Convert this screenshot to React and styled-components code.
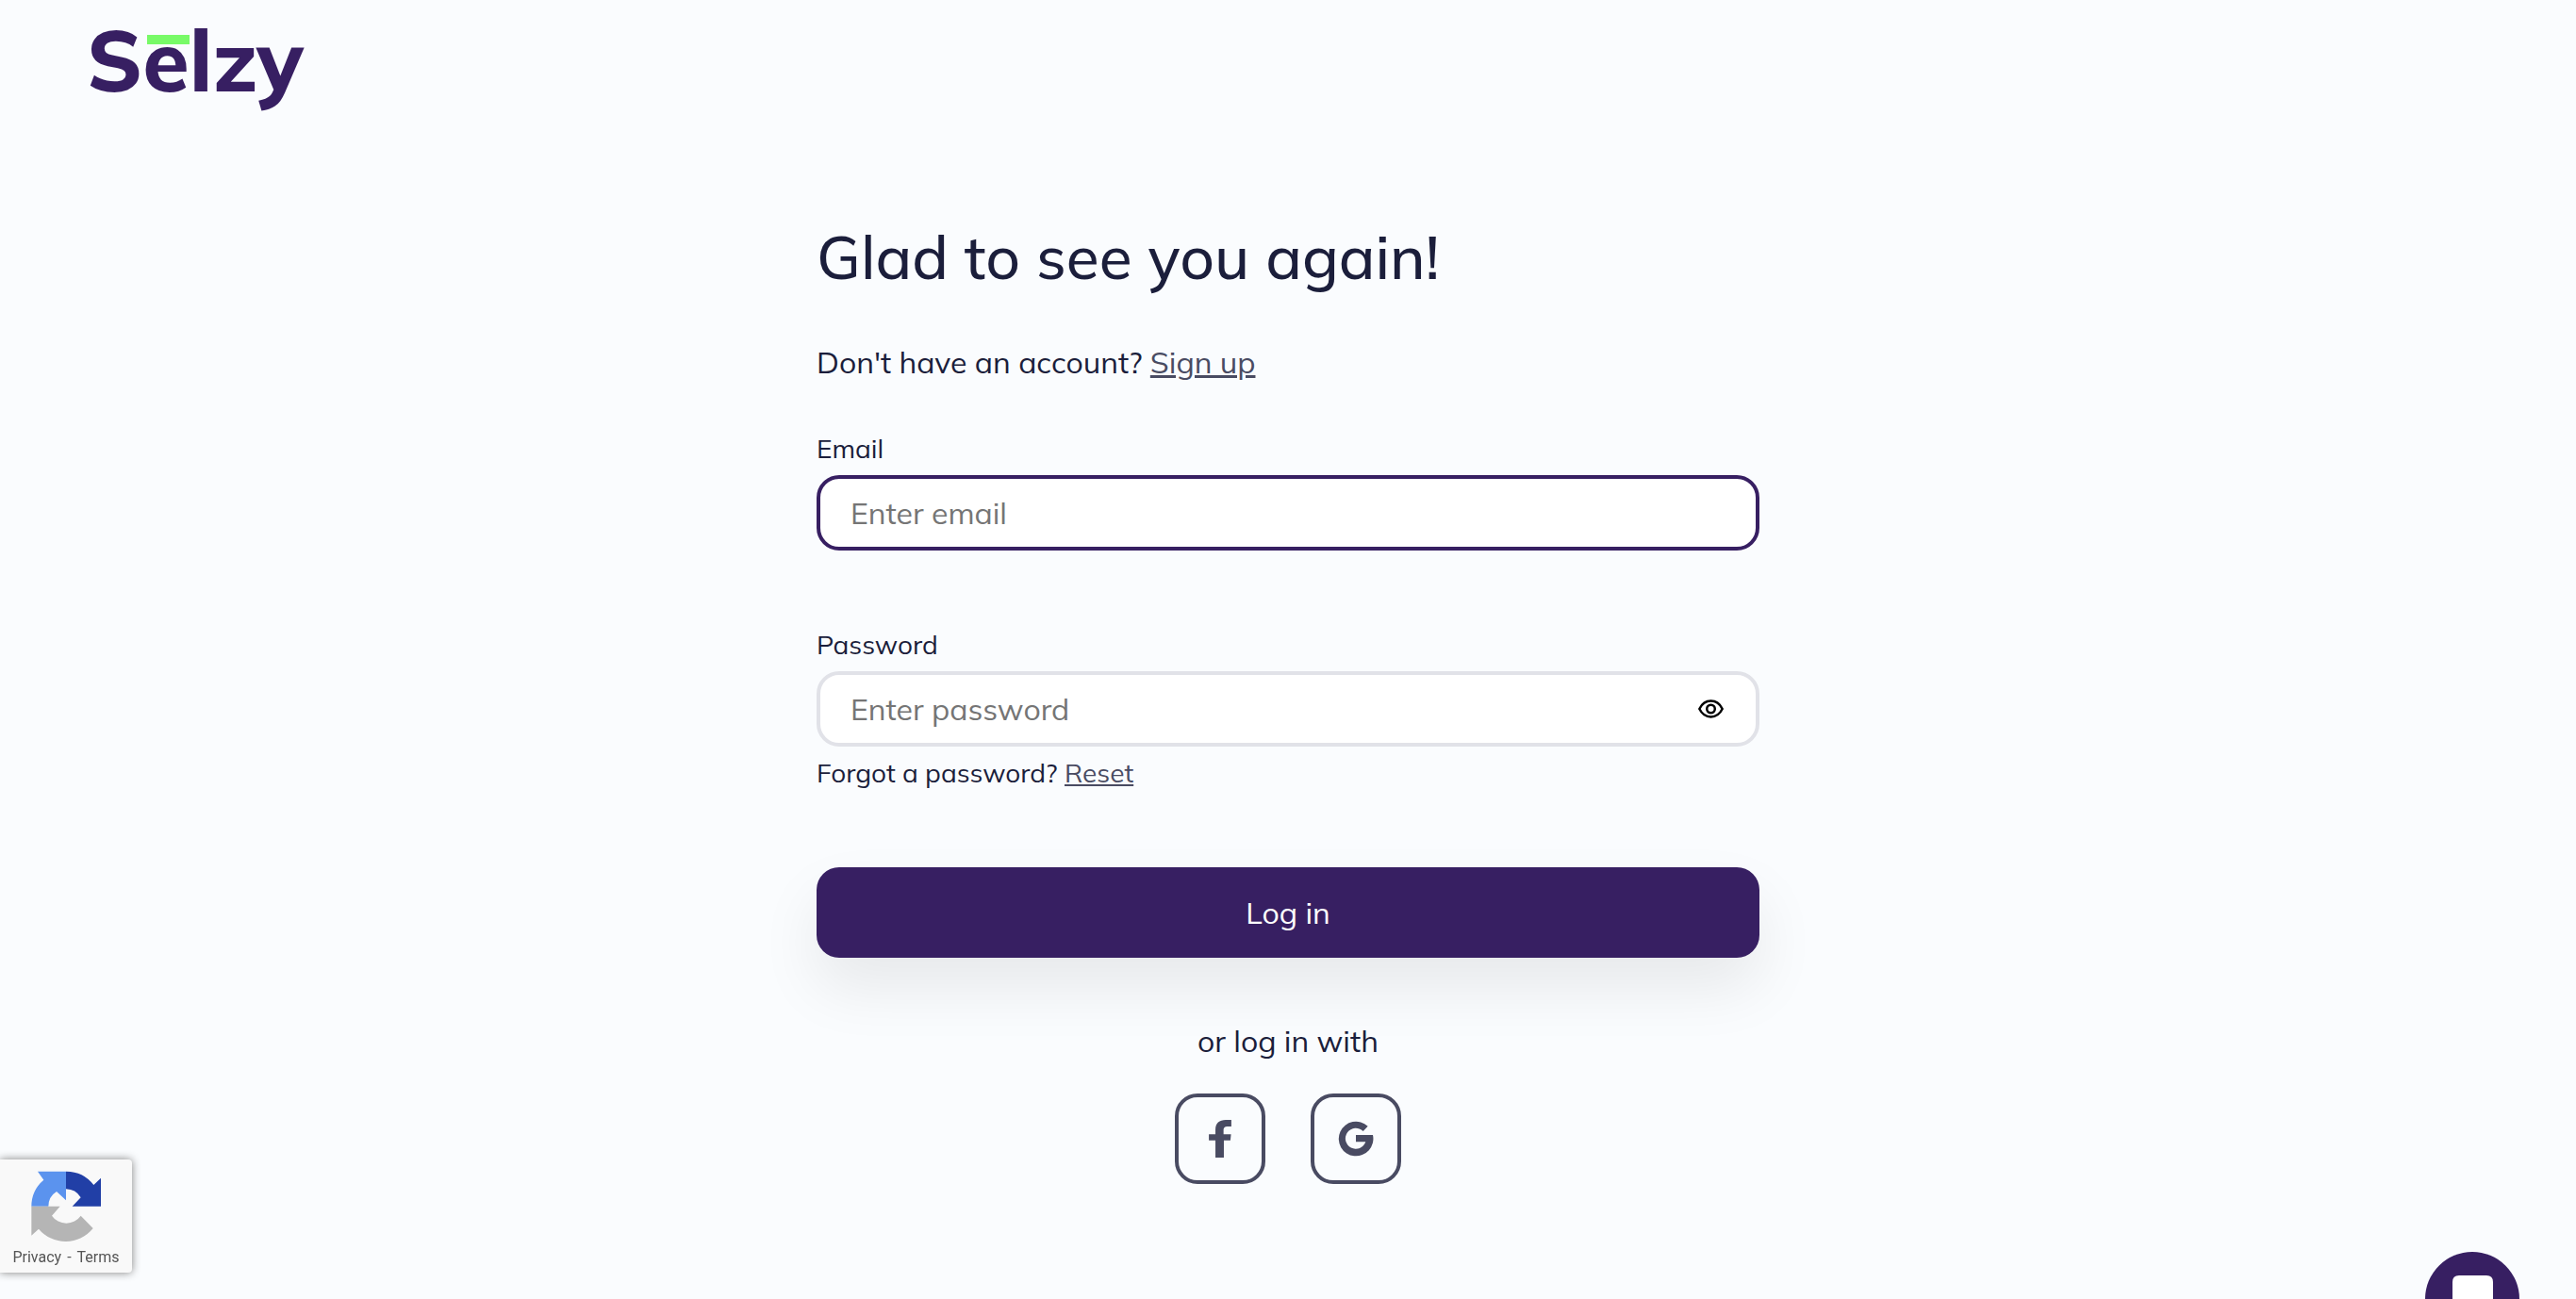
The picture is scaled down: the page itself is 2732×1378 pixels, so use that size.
import React, { useState } from "react";
import styled, { createGlobalStyle } from "styled-components";

const ink = "#1b1e3b";
const brand = "#371f62";
const muted = "#494b62";

const GlobalStyle = createGlobalStyle`
  *, *::before, *::after { box-sizing: border-box; }
  body {
    margin: 0;
    background: #fafcfe;
    color: ${ink};
    font-family: Mulish, "Noto Sans", sans-serif;
    font-size: 32px;
    line-height: 48px;
    overflow: hidden;
  }
  button, input { font: inherit; color: inherit; }
`;

const Page = styled.div`
  min-height: 100vh;
`;

const Header = styled.header`
  display: flex;
  padding: 22px 92px;
`;

const Logo = styled.a`
  position: relative;
  color: ${brand};
  font-family: Mulish, sans-serif;
  font-size: 90px;
  font-weight: 800;
  line-height: 84px;
  text-decoration: none;
`;

const Macron = styled.span`
  position: absolute;
  top: 15px;
  left: 64px;
  width: 45px;
  height: 10px;
  background: #78fa68;
`;

const Main = styled.main`
  width: 100%;
  max-width: 1000px;
  margin: 0 auto;
  padding-top: 104px;
`;

const Title = styled.h1`
  margin: 0 0 48px;
  font-size: 64px;
  font-weight: 500;
  line-height: 80px;
`;

const Text = styled.p`
  margin: 0;
  font-size: ${(p) => (p.$small ? "28px" : "32px")};
  line-height: ${(p) => (p.$small ? "40px" : "48px")};
  text-align: ${(p) => (p.$center ? "center" : "left")};
`;

const TextLink = styled.a`
  color: ${muted};
  text-decoration: underline;
`;

const Form = styled.form`
  display: flex;
  flex-direction: column;
  gap: 80px;
  margin: 48px 0 64px;
`;

const Field = styled.div`
  display: flex;
  flex-direction: column;
  gap: 8px;
`;

const Label = styled.label`
  font-size: 28px;
  line-height: 40px;
`;

const InputBox = styled.div`
  display: flex;
  align-items: center;
  height: 80px;
  padding: 0 32px;
  background: #fff;
  border: 4px solid ${(p) => (p.$active ? brand : "#e1e2e8")};
  border-radius: 24px;
`;

const Input = styled.input`
  flex: 1;
  min-width: 0;
  height: 100%;
  padding: 0;
  border: 0;
  outline: 0;
  background: transparent;
  &::placeholder { color: #757575; opacity: 1; }
`;

const IconButton = styled.button`
  display: grid;
  place-items: center;
  width: 32px;
  height: 32px;
  padding: 0;
  border: 0;
  background: transparent;
  color: #000;
  cursor: pointer;
`;

const Submit = styled.button`
  height: 96px;
  border: 0;
  border-radius: 24px;
  background: ${brand};
  color: #fff;
  box-shadow: 0 32px 64px rgba(0, 0, 0, 0.08);
  cursor: pointer;
`;

const Socials = styled.div`
  display: flex;
  justify-content: center;
  gap: 48px;
  margin-top: 32px;
`;

const SocialButton = styled.button`
  display: grid;
  place-items: center;
  width: 96px;
  height: 96px;
  padding: 0;
  border: 4px solid ${muted};
  border-radius: 24px;
  background: transparent;
  color: ${muted};
  cursor: pointer;
`;

const Captcha = styled.aside`
  position: fixed;
  left: 0;
  bottom: 28px;
  display: flex;
  flex-direction: column;
  align-items: center;
  width: 140px;
  height: 120px;
  padding-top: 12px;
  border-radius: 0 4px 4px 0;
  background: #f9f9f9;
  box-shadow: 0 0 10px #808080;
`;

const CaptchaLinks = styled.div`
  display: flex;
  gap: 6px;
  margin-top: 4px;
  color: #555;
  font-family: Roboto, sans-serif;
  font-size: 16px;
  line-height: 24px;
  a { color: inherit; text-decoration: none; }
`;

const ChatButton = styled.button`
  position: fixed;
  right: 60px;
  bottom: -50px;
  display: flex;
  justify-content: center;
  width: 100px;
  height: 100px;
  padding: 25px 0 0;
  border: 0;
  border-radius: 50%;
  background: ${brand};
  cursor: pointer;
`;

const EyeIcon = () => (
  <svg width="27" height="20" viewBox="301 156 82 60" fill="none" stroke="currentColor" strokeWidth="7.5" aria-hidden="true">
    <path d="M305 186C322 152 362 152 379 186C362 220 322 220 305 186Z" strokeLinejoin="round" />
    <circle cx="342" cy="186" r="13" />
  </svg>
);

const FacebookIcon = () => (
  <svg width="24" height="40" viewBox="186 353 72 121" fill="currentColor" aria-hidden="true">
    <path d="M207 474V419H186V399H207V385C207 363 220 353 240 353H258V374H247C236 374 233 378 233 387V399H257L255 419H234V474Z" />
  </svg>
);

const GoogleIcon = () => (
  <svg width="38" height="38" viewBox="597 357 114 114" fill="currentColor" aria-hidden="true">
    <path d="M692 374L677 390A33 33 0 1 0 685 424H654V402H708A55 55 0 1 1 692 374Z" />
  </svg>
);

const CaptchaIcon = () => (
  <svg width="74" height="76" viewBox="99 97 222 228" aria-hidden="true">
    <path fill="#5b93ee" d="M100 210A110 110 0 0 1 139 126L120 99H210V191L180 163A56 56 0 0 0 154 210Z" />
    <path fill="#213fa6" d="M210 99A110 110 0 0 1 298 142L321 120V210H230L257 182A56 56 0 0 0 210 155Z" />
    <path fill="#b5b5b5" d="M100 210H191L165 240A56 56 0 0 0 257 240L296 280A112 112 0 0 1 123 282L100 303Z" />
  </svg>
);

const ChatIcon = () => (
  <svg width="43" height="48" viewBox="0 0 43 48" fill="#fff" aria-hidden="true">
    <path d="M7 0H36Q43 0 43 7V48L32 40H7Q0 40 0 33V7Q0 0 7 0Z" />
  </svg>
);

export default function App() {
  const [visible, setVisible] = useState(false);
  return (
    <Page>
      <GlobalStyle />
      <Header>
        <Logo href="#">
          Selzy
          <Macron />
        </Logo>
      </Header>
      <Main>
        <Title>Glad to see you again!</Title>
        <Text>
          Don't have an account? <TextLink href="#signup">Sign up</TextLink>
        </Text>
        <Form onSubmit={(e) => e.preventDefault()}>
          <Field>
            <Label htmlFor="email">Email</Label>
            <InputBox $active>
              <Input id="email" type="email" placeholder="Enter email" />
            </InputBox>
          </Field>
          <Field>
            <Label htmlFor="password">Password</Label>
            <InputBox>
              <Input id="password" type={visible ? "text" : "password"} placeholder="Enter password" />
              <IconButton type="button" aria-label="Show password" onClick={() => setVisible(!visible)}>
                <EyeIcon />
              </IconButton>
            </InputBox>
            <Text $small>
              Forgot a password? <TextLink href="#reset">Reset</TextLink>
            </Text>
          </Field>
          <Submit type="submit">Log in</Submit>
        </Form>
        <Text $center>or log in with</Text>
        <Socials>
          <SocialButton type="button" aria-label="Facebook">
            <FacebookIcon />
          </SocialButton>
          <SocialButton type="button" aria-label="Google">
            <GoogleIcon />
          </SocialButton>
        </Socials>
      </Main>
      <Captcha>
        <CaptchaIcon />
        <CaptchaLinks>
          <a href="#privacy">Privacy</a>
          <span>-</span>
          <a href="#terms">Terms</a>
        </CaptchaLinks>
      </Captcha>
      <ChatButton type="button" aria-label="Chat">
        <ChatIcon />
      </ChatButton>
    </Page>
  );
}
